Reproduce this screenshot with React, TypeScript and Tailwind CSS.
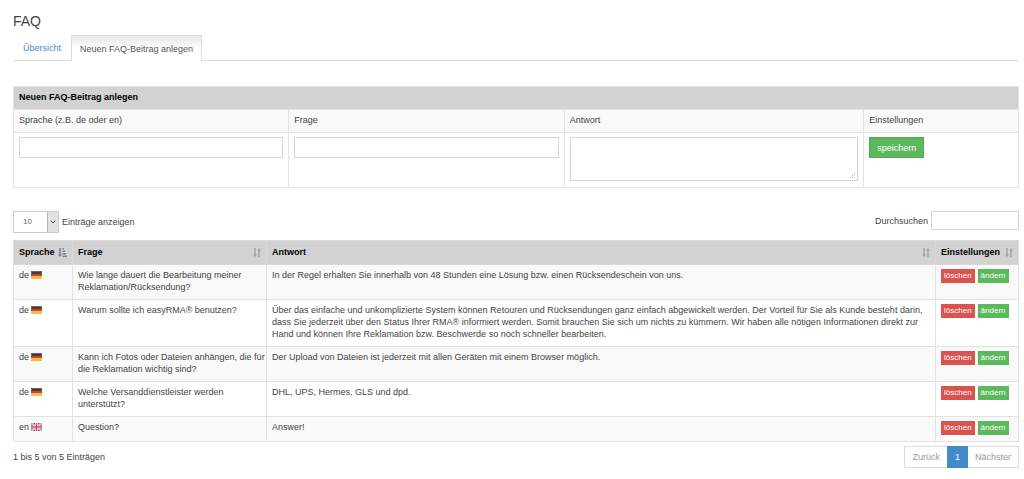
import React from "react";

type Lang = "de" | "en";

interface Entry {
  lang: Lang;
  question: string;
  answer: string;
}

const entries: Entry[] = [
  {
    lang: "de",
    question: "Wie lange dauert die Bearbeitung meiner Reklamation/Rücksendung?",
    answer:
      "In der Regel erhalten Sie innerhalb von 48 Stunden eine Lösung bzw. einen Rücksendeschein von uns.",
  },
  {
    lang: "de",
    question: "Warum sollte ich easyRMA® benutzen?",
    answer:
      "Über das einfache und unkomplizierte System können Retouren und Rücksendungen ganz einfach abgewickelt werden. Der Vorteil für Sie als Kunde besteht darin, dass Sie jederzeit über den Status Ihrer RMA® informiert werden. Somit brauchen Sie sich um nichts zu kümmern. Wir haben alle nötigen Informationen direkt zur Hand und können Ihre Reklamation bzw. Beschwerde so noch schneller bearbeiten.",
  },
  {
    lang: "de",
    question: "Kann ich Fotos oder Dateien anhängen, die für die Reklamation wichtig sind?",
    answer: "Der Upload von Dateien ist jederzeit mit allen Geräten mit einem Browser möglich.",
  },
  {
    lang: "de",
    question: "Welche Versanddienstleister werden unterstützt?",
    answer: "DHL, UPS, Hermes, GLS und dpd.",
  },
  { lang: "en", question: "Question?", answer: "Answer!" },
];

function Flag({ lang }: { lang: Lang }) {
  if (lang === "de") {
    return (
      <svg role="img" aria-label="Deutsch" viewBox="0 0 11 8" className="h-2 w-[11px]">
        <rect width="11" height="3" fill="#6a6462" />
        <rect x="1" y="1" width="9" height="2" fill="#453a3a" />
        <rect y="3" width="11" height="2" fill="#e23a28" />
        <rect y="5" width="11" height="3" fill="#f3bd4c" />
      </svg>
    );
  }
  return (
    <svg role="img" aria-label="English" viewBox="0 0 11 8" className="h-2 w-[11px]">
      <rect width="11" height="8" fill="#6670ad" />
      <path d="M0 0L11 8M11 0L0 8" stroke="#f4e4ec" strokeWidth="1.8" />
      <path d="M0 0L11 8M11 0L0 8" stroke="#d8657c" strokeWidth="0.6" />
      <path d="M5.5 0V8M0 4H11" stroke="#fff" strokeWidth="2.6" />
      <path d="M5.5 0V8M0 4H11" stroke="#dc4058" strokeWidth="1.4" />
    </svg>
  );
}

function SortBoth() {
  return (
    <svg aria-hidden="true" viewBox="0 0 8 9" className="h-[9px] w-2 shrink-0" fill="#a6a6a6">
      <path d="M1.2 0H2.8V6.4H4L2 9L0 6.4H1.2Z" />
      <path d="M5.2 9H6.8V2.6H8L6 0L4 2.6H5.2Z" />
    </svg>
  );
}

function SortAscending() {
  return (
    <svg aria-hidden="true" viewBox="0 0 9 9" className="h-[9px] w-[9px] shrink-0" fill="#808080">
      <path d="M1.2 0H2.8V6.4H4L2 9L0 6.4H1.2Z" />
      <path d="M4.5 0H6V1.5H4.5ZM4.5 2.5H7V4H4.5ZM4.5 5H8V6.5H4.5ZM4.5 7.5H9V9H4.5Z" />
    </svg>
  );
}

const cellBase = "border border-[#e2e2e2] pt-1 pb-[6px] pl-[5px] text-left align-top";
const cell = `${cellBase} pr-[5px]`;
const field = "block w-full border border-[#d5d5d5] bg-white px-2 outline-none focus:border-[#428bca]";
const smallButton = "h-[14px] px-[3px] text-[8px] leading-[14px] text-white";

function HeaderCell({ label, sorted = false }: { label: string; sorted?: boolean }) {
  return (
    <th
      scope="col"
      aria-sort={sorted ? "ascending" : undefined}
      className="h-6 border border-[#d8d8d8] px-[5px] pb-px text-left align-middle font-bold text-black"
    >
      <button type="button" className="flex w-full items-center justify-between whitespace-nowrap">
        {label}
        {sorted ? <SortAscending /> : <SortBoth />}
      </button>
    </th>
  );
}

export default function App() {
  return (
    <main className="bg-white px-[13px] pt-[11px] pr-[5px] pb-3 font-['Liberation_Sans',Arial,sans-serif] text-[9px] leading-3 text-[#444]">
      <h1 className="text-[14px] leading-5 text-[#444]">FAQ</h1>

      <nav className="mt-1 flex h-[26px] border-b border-[#ddd]">
        <a href="#uebersicht" className="flex h-[26px] w-[58px] items-center px-[10px] text-[#428bca]">
          Übersicht
        </a>
        <a
          href="#neu"
          aria-current="page"
          className="flex h-[26px] items-center border border-b-0 border-[#ddd] bg-white bg-linear-to-b from-[#e6e6e6] to-white to-50% px-2 text-[#555]"
        >
          Neuen FAQ-Beitrag anlegen
        </a>
      </nav>

      <form onSubmit={(e) => e.preventDefault()}>
        <table className="mt-[25px] w-full table-fixed border-collapse">
          <colgroup>
            <col className="w-[27.4%]" />
            <col className="w-[27.4%]" />
            <col className="w-[29.8%]" />
            <col />
          </colgroup>
          <thead>
            <tr className="bg-[#d2d2d2] text-black">
              <th colSpan={4} className={cell}>
                Neuen FAQ-Beitrag anlegen
              </th>
            </tr>
          </thead>
          <tbody>
            <tr className="bg-[#f9f9f9]">
              <td className={cell}>
                <label htmlFor="sprache">Sprache (z.B. de oder en)</label>
              </td>
              <td className={cell}>
                <label htmlFor="frage">Frage</label>
              </td>
              <td className={cell}>
                <label htmlFor="antwort">Antwort</label>
              </td>
              <td className={cell}>Einstellungen</td>
            </tr>
            <tr>
              <td className={cell}>
                <input id="sprache" type="text" className={`${field} h-[21px]`} />
              </td>
              <td className={cell}>
                <input id="frage" type="text" className={`${field} h-[21px]`} />
              </td>
              <td className={cell}>
                <div className="relative">
                  <textarea id="antwort" className={`${field} h-11 resize-none`} />
                  <svg
                    aria-hidden="true"
                    viewBox="0 0 6 6"
                    className="pointer-events-none absolute right-[2px] bottom-[2px] size-1.5"
                    fill="#b8b8b8"
                  >
                    <path d="M4 0H5V1H4ZM2 2H3V3H2ZM4 2H5V3H4ZM0 4H1V5H0ZM2 4H3V5H2ZM4 4H5V5H4Z" />
                  </svg>
                </div>
              </td>
              <td className={cell}>
                <button
                  type="submit"
                  className="block h-[21px] border border-[#4cae4c] bg-[#5cb85c] px-[7px] text-white"
                >
                  speichern
                </button>
              </td>
            </tr>
          </tbody>
        </table>
      </form>

      <div className="mt-[23px] flex items-start justify-between">
        <label className="flex items-center gap-[3px]">
          <span className="relative flex h-[22px] w-[46px] border border-[#ccc]">
            <select defaultValue="10" className="w-full appearance-none bg-white pl-[9px] text-[8px] text-[#666]">
              <option>10</option>
              <option>25</option>
              <option>50</option>
              <option>100</option>
            </select>
            <span className="pointer-events-none absolute inset-y-0 right-0 flex w-[11px] items-center justify-center border-l border-[#b5b5b5] bg-[#e1e1e1]">
              <svg aria-hidden="true" viewBox="0 0 6 4" className="h-1 w-1.5" fill="none" stroke="#555">
                <path d="M0.7 0.6L3 3L5.3 0.6" />
              </svg>
            </span>
          </span>
          Einträge anzeigen
        </label>
        <label className="flex items-center gap-[3px]">
          Durchsuchen
          <input type="search" className="h-[19px] w-[88px] border border-[#d5d5d5] bg-white px-1 outline-none" />
        </label>
      </div>

      <table className="mt-[7px] w-full table-fixed border-collapse">
        <colgroup>
          <col className="w-[59px]" />
          <col className="w-[194px]" />
          <col />
          <col className="w-[83px]" />
        </colgroup>
        <thead>
          <tr className="bg-[#d2d2d2]">
            <HeaderCell label="Sprache" sorted />
            <HeaderCell label="Frage" />
            <HeaderCell label="Antwort" />
            <HeaderCell label="Einstellungen" />
          </tr>
        </thead>
        <tbody>
          {entries.map((entry) => (
            <tr key={entry.question} className="odd:bg-[#f9f9f9]">
              <td className={cell}>
                <span className="flex items-center gap-[2px]">
                  {entry.lang}
                  <Flag lang={entry.lang} />
                </span>
              </td>
              <td className={cellBase}>{entry.question}</td>
              <td className={cell}>{entry.answer}</td>
              <td className={cell}>
                <span className="flex gap-[3px]">
                  <button type="button" className={`${smallButton} bg-[#d9534f]`}>
                    löschen
                  </button>
                  <button type="button" className={`${smallButton} bg-[#5cb85c]`}>
                    ändern
                  </button>
                </span>
              </td>
            </tr>
          ))}
        </tbody>
      </table>

      <div className="mt-1 flex items-center justify-between">
        <p>1 bis 5 von 5 Einträgen</p>
        <nav aria-label="Seiten" className="flex h-[22px] border border-[#ddd] text-[#999]">
          <button type="button" disabled className="px-[7px]">
            Zurück
          </button>
          <button type="button" aria-current="page" className="-my-px bg-[#428bca] px-2 text-white">
            1
          </button>
          <button type="button" disabled className="px-[7px]">
            Nächster
          </button>
        </nav>
      </div>
    </main>
  );
}
